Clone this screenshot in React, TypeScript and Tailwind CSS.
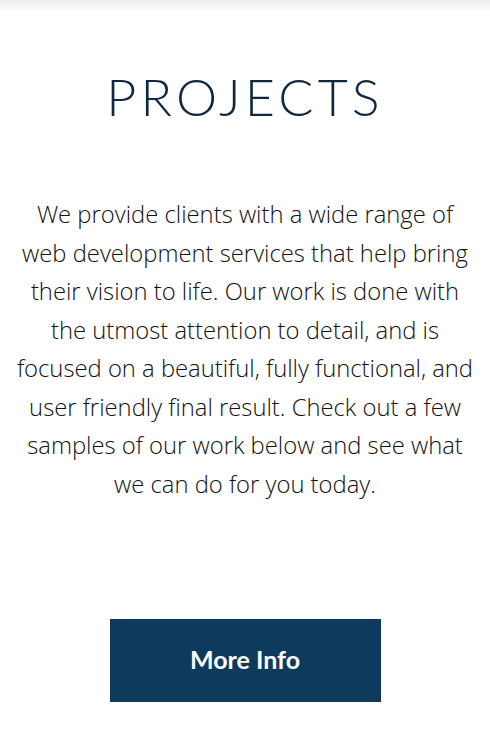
import React from 'react'

const lines = [
  'We provide clients with a wide range of',
  'web development services that help bring',
  'their vision to life. Our work is done with',
  'the utmost attention to detail, and is',
  'focused on a beautiful, fully functional, and',
  'user friendly final result. Check out a few',
  'samples of our work below and see what',
  'we can do for you today.',
]

export default function App() {
  return (
    <div className="min-h-[748px] w-full bg-white">
      <div className="h-[12px] bg-gradient-to-b from-[#ececec] to-white" />
      <section className="flex flex-col items-center px-2">
        <h1 className="mt-[58px] font-['Lato',sans-serif] text-[52px] font-light leading-none tracking-[0.08em] text-[#0e2840]">
          PROJECTS
        </h1>
        <p className="mt-[73px] whitespace-nowrap text-center font-['Open_Sans',sans-serif] text-[23.8px] font-light leading-[38.5px] text-[#111]">
          {lines.map((l, i) => (
            <React.Fragment key={i}>
              {l}
              {i < lines.length - 1 && <br />}
            </React.Fragment>
          ))}
        </p>
        <button className="mt-[116px] h-[83px] w-[271px] bg-[#0e3a5e] pb-[2px] font-['Lato',sans-serif] text-[25px] font-bold text-white">
          More Info
        </button>
      </section>
    </div>
  )
}
